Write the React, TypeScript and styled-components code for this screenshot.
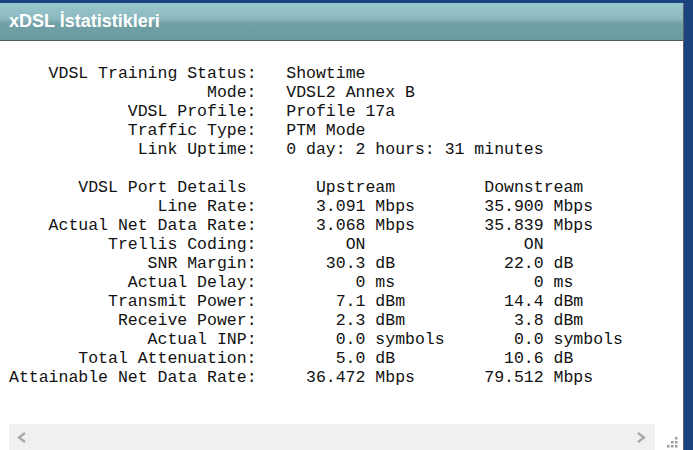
import React from "react";
import styled, { createGlobalStyle } from "styled-components";

const Global = createGlobalStyle`
  html, body { margin: 0; padding: 0; height: 100%; overflow: hidden; }
  body { background: #1a4380; font-family: "Liberation Sans", Arial, sans-serif; }
  #root { height: 100%; }
`;

const Page = styled.div`
  display: flex;
  flex-direction: column;
  height: 100%;
  padding-top: 3px;
  box-sizing: border-box;
`;

const Panel = styled.section`
  width: 684px;
  flex: 1;
  display: flex;
  flex-direction: column;
  background: #fff;
  border-right: 1px solid #5a6168;
  box-sizing: border-box;
`;

const Header = styled.h1`
  margin: 0;
  height: 38px;
  display: flex;
  align-items: center;
  padding: 0 0 1px 9px;
  box-sizing: border-box;
  background: linear-gradient(#9ac6cd 0%, #8dbac0 40%, #82b0b6 48%, #71a1a6 54%, #6a9ba0 100%);
  border-bottom: 1px solid #4e5c60;
  color: #fff;
  font-family: "Liberation Sans", Arial, sans-serif;
  font-weight: bold;
  font-size: 18px;
  letter-spacing: 0;
`;

const Body = styled.div`
  display: flex;
  flex-direction: column;
  padding: 23px 0 0 9px;
  font-family: "Liberation Mono", "Courier New", monospace;
  font-size: 16.5px;
  line-height: 19px;
  color: #111;
`;

const InfoGrid = styled.div`
  display: grid;
  grid-template-columns: 25ch auto;
  column-gap: 3ch;
  white-space: pre;
`;

const PortGrid = styled.div`
  display: grid;
  grid-template-columns: 25ch 11ch 8ch 10ch auto;
  margin-top: 19px;
  white-space: pre;
`;

const Label = styled.div<{ $pad?: number }>`
  text-align: right;
  padding-right: ${(p) => p.$pad ?? 0}ch;
`;

const Value = styled.div``;

const Num = styled.div`
  text-align: right;
`;

const Unit = styled.div`
  padding-left: 1ch;
`;

const ColHead = styled.div<{ $indent: number }>`
  grid-column: span 2;
  padding-left: ${(p) => p.$indent}ch;
`;

const ScrollRow = styled.div`
  display: flex;
  margin-top: 37px;
  height: 26px;
`;

const Track = styled.div`
  flex: 1;
  background: #f0f0f0;
  display: flex;
  align-items: center;
  justify-content: space-between;
  padding: 0 9px 0 8px;
`;

const Corner = styled.div`
  width: 28px;
  display: flex;
  align-items: flex-end;
  padding: 0 0 1px 10px;
  box-sizing: border-box;
`;

const Chevron = ({ dir }: { dir: "left" | "right" }) => (
  <svg width="10" height="11" viewBox="0 0 10 11">
    <polyline
      points={dir === "left" ? "8,1 2,5.5 8,10" : "2,1 8,5.5 2,10"}
      fill="none"
      stroke="#a6a6a6"
      strokeWidth="2.2"
    />
  </svg>
);

const Grip = () => (
  <svg width="13" height="12" viewBox="0 0 13 12">
    {[
      [10, 0],
      [6, 4],
      [10, 4],
      [2, 8],
      [6, 8],
      [10, 8],
    ].map(([x, y], i) => (
      <rect key={i} x={x} y={y} width="2.5" height="2.5" fill="#9a9a9a" />
    ))}
  </svg>
);

const info: [string, string][] = [
  ["VDSL Training Status:", "Showtime"],
  ["Mode:", "VDSL2 Annex B"],
  ["VDSL Profile:", "Profile 17a"],
  ["Traffic Type:", "PTM Mode"],
  ["Link Uptime:", "0 day: 2 hours: 31 minutes"],
];

const port: [string, string, string, string, string][] = [
  ["Line Rate:", "3.091", "Mbps", "35.900", "Mbps"],
  ["Actual Net Data Rate:", "3.068", "Mbps", "35.839", "Mbps"],
  ["Trellis Coding:", "ON", "", "ON", ""],
  ["SNR Margin:", "30.3", "dB", "22.0", "dB"],
  ["Actual Delay:", "0", "ms", "0", "ms"],
  ["Transmit Power:", "7.1", "dBm", "14.4", "dBm"],
  ["Receive Power:", "2.3", "dBm", "3.8", "dBm"],
  ["Actual INP:", "0.0", "symbols", "0.0", "symbols"],
  ["Total Attenuation:", "5.0", "dB", "10.6", "dB"],
  ["Attainable Net Data Rate:", "36.472", "Mbps", "79.512", "Mbps"],
];

export default function App() {
  return (
    <Page>
      <Global />
      <Panel>
        <Header>xDSL İstatistikleri</Header>
        <Body>
          <InfoGrid>
            {info.map(([l, v]) => (
              <React.Fragment key={l}>
                <Label>{l}</Label>
                <Value>{v}</Value>
              </React.Fragment>
            ))}
          </InfoGrid>
          <PortGrid>
            <Label $pad={1}>VDSL Port Details</Label>
            <ColHead $indent={6}>Upstream</ColHead>
            <ColHead $indent={4}>Downstream</ColHead>
            {port.map(([l, un, uu, dn, du]) => (
              <React.Fragment key={l}>
                <Label>{l}</Label>
                <Num>{un}</Num>
                <Unit>{uu}</Unit>
                <Num>{dn}</Num>
                <Unit>{du}</Unit>
              </React.Fragment>
            ))}
          </PortGrid>
          <ScrollRow>
            <Track>
              <Chevron dir="left" />
              <Chevron dir="right" />
            </Track>
            <Corner>
              <Grip />
            </Corner>
          </ScrollRow>
        </Body>
      </Panel>
    </Page>
  );
}
